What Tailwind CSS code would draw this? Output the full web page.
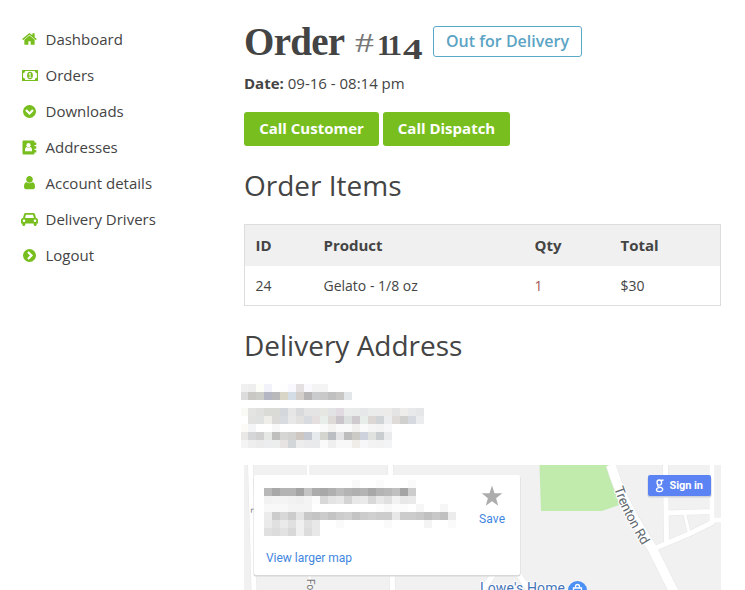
<!DOCTYPE html>
<html lang="en">
<head>
<meta charset="utf-8">
<title>Order #114</title>
<script src="https://cdn.jsdelivr.net/npm/@tailwindcss/browser@4"></script>
</head>
<body class="bg-white text-[#444] font-['Open_Sans',sans-serif]">
<div class="flex h-[590px] w-[745px] overflow-hidden">
  <nav class="w-[244px] shrink-0 pt-[21px] pl-[21px] text-[15px]">
    <ul class="fill-[#77be1e]">
      <li class="flex h-9 items-center gap-[7.500px]"><span class="flex w-[17px] justify-center"><svg width="15" height="16" viewBox="0 0 1664 1792"><path d="M1408 992v480q0 26-19 45t-45 19h-384v-384h-256v384h-384q-26 0-45-19t-19-45v-480q0-1 .5-3t.5-3l575-474 575 474q1 2 1 6zm223-69l-62 74q-8 9-21 11h-3q-13 0-21-7l-692-577-692 577q-12 8-24 7-13-2-21-11l-62-74q-8-10-7-23.5t11-21.5l719-599q32-26 76-26t76 26l244 204v-195q0-14 9-23t23-9h192q14 0 23 9t9 23v408l219 182q10 8 11 21.5t-7 23.5z"/></svg></span><a>Dashboard</a></li>
      <li class="flex h-9 items-center gap-[7.500px]"><span class="flex w-[17px] justify-center"><svg width="16" height="11" viewBox="0 0 16 11"><path fill-rule="evenodd" d="M.5 0h15a.5.5 0 0 1 .5.5v10a.5.5 0 0 1-.5.5H.5a.5.5 0 0 1-.5-.5V.5A.5.5 0 0 1 .5 0zM3.200 1.100A2.200 2.200 0 0 1 1.100 3.200v4.600A2.200 2.200 0 0 1 3.200 9.900h9.600a2.200 2.200 0 0 1 2.100-2.100V3.200A2.200 2.200 0 0 1 12.800 1.100z"/><ellipse cx="8" cy="5.500" rx="2.900" ry="3.700"/><path class="fill-white" d="M7.700 3.100h.9v3.900h.8v.8H6.700V7h.9V4.400l-.7.4-.4-.6z"/></svg></span><a>Orders</a></li>
      <li class="flex h-9 items-center gap-[7.500px]"><span class="flex w-[17px] justify-center"><svg width="13" height="13" viewBox="0 0 13 13"><circle cx="6.500" cy="6.500" r="6.500"/><path class="fill-none stroke-white stroke-[2.200]" d="M3 5l3.500 3.500 3.500-3.500"/></svg></span><a>Downloads</a></li>
      <li class="flex h-9 items-center gap-[7.500px]"><span class="flex w-[17px] justify-center"><svg width="15" height="15" viewBox="0 0 15 15"><path d="M1.500.5h10a1 1 0 0 1 1 1v12a1 1 0 0 1-1 1h-10a1 1 0 0 1-1-1v-12a1 1 0 0 1 1-1zM12.500 2.500h1.800v2.400h-1.800zM12.500 6.300h1.800v2.400h-1.800zM12.500 10.100h1.800v2.400h-1.800z"/><circle class="fill-white" cx="6.500" cy="5.200" r="2.100"/><path class="fill-white" d="M3 11.200c-.2-2.600.6-4 1.800-4.200q1.700 1.200 3.400 0c1.200.2 2 1.600 1.800 4.200z"/></svg></span><a>Addresses</a></li>
      <li class="flex h-9 items-center gap-[7.500px]"><span class="flex w-[17px] justify-center"><svg width="11" height="15.400" viewBox="0 0 1280 1792"><path d="M1280 1399q0 109-62.500 187t-150.500 78h-854q-88 0-150.500-78t-62.500-187q0-85 8.500-160.500t31.500-152 58.500-131 94-89 134.500-34.500q131 128 313 128t313-128q76 0 134.500 34.500t94 89 58.500 131 31.500 152 8.500 160.500zm-256-887q0 159-112.500 271.500t-271.500 112.500-271.500-112.500-112.500-271.500 112.500-271.500 271.500-112.500 271.500 112.500 112.500 271.500z"/></svg></span><a>Account details</a></li>
      <li class="flex h-9 items-center gap-[7.500px]"><span class="flex w-[17px] justify-center"><svg width="17" height="13" viewBox="0 0 17 13"><path fill-rule="evenodd" d="M4.800 0h7.400c1 0 1.700.6 1.900 1.500L15 5c1.300.2 2 1 2 2.200v3c0 .2-.1.300-.3.300h-1v1c0 .9-.7 1.500-1.500 1.500s-1.500-.6-1.500-1.500v-1H4.300v1c0 .9-.7 1.500-1.500 1.500s-1.500-.6-1.500-1.500v-1h-1C.1 10.500 0 10.400 0 10.200v-3C0 6 .7 5.200 2 5l.9-3.500C3.100.6 3.800 0 4.800 0zM4.900 1.700L4.100 5h8.800l-.8-3.300zM3 6.500a1.300 1.300 0 1 0 0 2.600 1.300 1.300 0 0 0 0-2.600zM14 6.500a1.300 1.300 0 1 0 0 2.600 1.300 1.300 0 0 0 0-2.600z"/></svg></span><a>Delivery Drivers</a></li>
      <li class="flex h-9 items-center gap-[7.500px]"><span class="flex w-[17px] justify-center"><svg width="13" height="13" viewBox="0 0 13 13"><circle cx="6.500" cy="6.500" r="6.500"/><path class="fill-none stroke-white stroke-[2.200]" d="M5 3l3.500 3.500L5 10"/></svg></span><a>Logout</a></li>
    </ul>
  </nav>

  <main class="w-[477px] shrink-0">
    <header class="flex h-[70px] pt-[26px]">
      <h1 class="-mt-px flex h-[34px] w-[189px] items-baseline font-['Liberation_Serif',serif] text-[39px] leading-[34px] font-bold whitespace-nowrap"><span class="w-[111px] tracking-[-0.700px]">Order</span><span class="relative top-[-3px] w-[22px] origin-left scale-x-[1.350] text-[28px] font-normal text-[#777]">#</span><span class="w-[25px] text-[29px] tracking-[-2.500px]">11</span><span class="relative top-[4px] left-px origin-left scale-x-[1.350] text-[29px]">4</span></h1>
      <span class="flex h-[31px] w-[149px] items-center justify-center rounded-[3px] border border-[#5ba9c9] pb-[2px] text-[16px] font-semibold text-[#5ba4c4]">Out for Delivery</span>
    </header>
    <p class="h-[42px] pt-px text-[15px] leading-[24px]"><strong>Date:</strong> 09-16 - 08:14 pm</p>
    <div class="flex gap-1 text-[15px] font-bold text-white">
      <button class="h-[34px] w-[135px] rounded-[3px] bg-[#77be1e] pb-[2px]">Call Customer</button>
      <button class="h-[34px] w-[127px] rounded-[3px] bg-[#77be1e] pb-[2px]">Call Dispatch</button>
    </div>
    <h2 class="h-[78px] pt-[19px] text-[28px] leading-[40px]">Order Items</h2>
    <table class="h-[82px] w-full table-fixed border-collapse border border-[#ddd] text-left text-[14px]">
      <colgroup><col class="w-[68px]"><col class="w-[211px]"><col class="w-[86px]"><col></colgroup>
      <thead class="bg-[#f0f0f0] text-[15px]"><tr class="h-[41px]"><th class="pl-[10.500px]">ID</th><th class="pl-[11px]">Product</th><th class="pl-[11px]">Qty</th><th class="pl-[11px]">Total</th></tr></thead>
      <tbody><tr class="h-[40px]"><td class="pl-[10.500px]">24</td><td class="pl-[11px]">Gelato - 1/8 oz</td><td class="pl-[11px] text-[#a35458]">1</td><td class="pl-[11px]">$30</td></tr></tbody>
    </table>
    <h2 class="h-[78px] pt-[19px] text-[28px] leading-[40px]">Delivery Address</h2>
    <svg id="address" class="-ml-1 block" width="184" height="81" viewBox="240 384 184 81"></svg>
    <svg class="block" width="477" height="125" viewBox="244 465 477 125">
      <rect x="244" y="465" width="477" height="125" fill="#f1f1f1"/>
      <path d="M539.500 465H608L619 505L602 511H541z" fill="#c0ebad"/>
      <g fill="none" stroke="#e6e6e6">
        <path stroke-width="6" d="M250.500 465L254 590M390.500 465L392.500 590M665.500 465L666.500 545M667 513L712 511.500M712 465V522M651 550L690 533.500L712 522.500L714 520H721"/>
        <path stroke-width="4" d="M308 465L310 590M685 515L689 532"/>
        <path stroke-width="6.500" d="M482 591L495 572M516 571L530 591"/>
        <path stroke-width="10.500" d="M611 465C619 492 628 510 652 548L674 592"/>
      </g>
      <g fill="none" stroke="#fff">
        <path stroke-width="5" d="M250.500 465L254 590M390.500 465L392.500 590M665.500 465L666.500 545M667 513L712 511.500M712 465V522M651 550L690 533.500L712 522.500L714 520H721"/>
        <path stroke-width="3" d="M308 465L310 590M685 515L689 532"/>
        <path stroke-width="5.500" d="M482 591L495 572M516 571L530 591"/>
        <path stroke-width="9.500" d="M611 465C619 492 628 510 652 548L674 592"/>
      </g>
      <path id="trenton" d="M614 488.500Q622.500 514 645 550" fill="none"/>
      <g class="font-['Roboto',sans-serif]">
        <text font-size="13.500" fill="#616a70" stroke="#fff" stroke-width="2" paint-order="stroke"><textPath href="#trenton" textLength="64">Trenton Rd</textPath></text>
        <text transform="translate(307 579) rotate(90)" font-size="10" fill="#777">Fo</text>
        <text transform="translate(250.500 508) rotate(90)" font-size="9" fill="#777">L</text>
        <text x="480" y="593" font-size="14" fill="#4674b8" stroke="#fff" stroke-width="2" paint-order="stroke" textLength="85">Lowe's Home</text>
        <circle cx="577.500" cy="590.500" r="9.500" fill="#4a90f5"/>
        <path d="M573.500 588h8v5h-8zM575.500 588v-1.500a2 2 0 0 1 4 0v1.500" fill="none" stroke="#fff" stroke-width="1.300"/>
        <rect x="253.500" y="476.500" width="267" height="100" rx="2" fill="#d8d8d8"/>
        <rect x="254" y="475" width="266" height="100" rx="2" fill="#fff"/>
        <g id="place"></g>
        <path d="M492 485.500L494.500 493.300H502.300L496.100 498.200L498.300 505.800L492 501.200L485.700 505.800L487.900 498.200L481.700 493.300H489.500z" fill="#adadad"/>
        <text x="479" y="522.500" font-size="12" fill="#3f86e0" textLength="26">Save</text>
        <text x="266" y="562" font-size="12" fill="#3f86e0" textLength="86">View larger map</text>
        <rect x="647.500" y="476.500" width="64" height="21" rx="2" fill="#cfd2d8"/>
        <rect x="648" y="475" width="63" height="21" rx="2" fill="#5c83f3"/>
        <g fill="none" stroke="#fff" stroke-width="1.300"><ellipse cx="659.300" cy="482.600" rx="2.300" ry="2.600"/><path d="M661 480.500L663.500 480M658 485.200Q657 486.500 659 487Q663 487.600 662.700 489.700Q662 491.800 659.300 491.700Q656 491.500 656.500 489.400Q657 487.500 660 487.300"/></g>
        <text x="669.500" y="489" font-size="11" font-weight="700" fill="#fff" textLength="33.500">Sign in</text>
      </g>
    </svg>
  </main>
</div>
<script>
// Each row: top edge, then one colour per 8px cell; "." leaves a cell empty.
function drawCells(id, left, rows) {
  const host = document.getElementById(id);
  for (const [top, cells] of rows) cells.split(' ').forEach((c, i) => {
    if (c === '.') return;
    const r = document.createElementNS('http://www.w3.org/2000/svg', 'rect');
    const x = Math.max(left + i * 8, left === 240 ? 241 : left);
    r.setAttribute('x', x);
    r.setAttribute('y', top);
    r.setAttribute('width', left + i * 8 + 8 - x);
    r.setAttribute('height', 8);
    r.setAttribute('shape-rendering', 'crispEdges');
    r.setAttribute('fill', '#' + (c.length === 2 ? c + c + c : c));
    host.appendChild(r);
  });
}
drawCells('address', 240, [
  [384, 'f1f0f1 ee fefef8 f2f2fa . fe f8f8fe e4e0e2 fafafe f4 f4'],
  [392, 'dc c9c8c4 cccdc8 b4b7c3 b9b9bb d9d5c7 d4dce6 d4cfcb b7b5b6 cacbcc c9 c0 c9c7c5 e3e7ea'],
  [408, 'f9f9f6 e4e4e2 e0e0de dadad6 dadad6 d4d8dd e6 d9dadc e4 e4 e6e6e3 e2e3e5 e1dbe1 eaecec e9ebeb e6e7e9 eaebeb eb ecebea e4 eeedeb e8e9eb e4e6e8'],
  [416, '. e2e2e0 e0e2e2 efeee8 dcdad8 d8dce0 e8 e2e1df d8dce0 e5dfdf e8eeea dddad7 cac5cb dce1e0 cfcacd e7eeea dcd7d5 d0d4d6 ebedee dfdbd8 d0d0ce d6dae0 eaeced'],
  [424, 'fcfbf8 f3f5f7 . . f8f8f9 . . . . . fa f5f3f1 fafafb fa f3f1ef fa f5 f3 f7f7f9'],
  [432, 'e9e8e6 d4d6d8 d0d0d1 e6e8e6 bfc0be d6d6d4 d2d2d1 cec6c0 c4c9d2 e6eaec d5d5cf bbbec3 e4e4e7 bd cccac4 cdd2dc e0e2e0 cacdcf e9ebed'],
  [440, 'f4 eeeeef ecebeb ecedee ebeeed e6e3e2 d3d6d8 ed eaeaec e8eaec fa ef f8 f8 f0ede9 f7f7f9 f3 f2 f3f4f5']
]);
drawCells('place', 264, [
  [480, '. . . . . . . . . . . f9 . . fb . . . fa'],
  [488, 'b8 a8 b4 b4 a4 c4 ac a8 b0 bc b4 b0 b4 a8 b4 b8 c0 a4 cc'],
  [496, 'f2 f4 f4 f2 f0 f4 fc d8 e4 e8 d4 e8 ea d8 e8 e0 f2 e8 ea'],
  [504, 'f8 f8 f8 f4 f4 f4 . . . . . . . . fc f8 fc fc . f6 . . f6'],
  [512, 'ec cc d8 cc e4 c8 c4 cc c4 cc d0 c4 cc d0 cc cc e8 cc cc c8 c0 c8 c0 ec'],
  [520, 'ea e0 ea e0 f0 e0 e8 . . fa . . . . . fa . . . . f4 . . fa'],
  [528, 'e0 dc e2 d8 f0 dc e8']
]);
</script>
</body>
</html>
